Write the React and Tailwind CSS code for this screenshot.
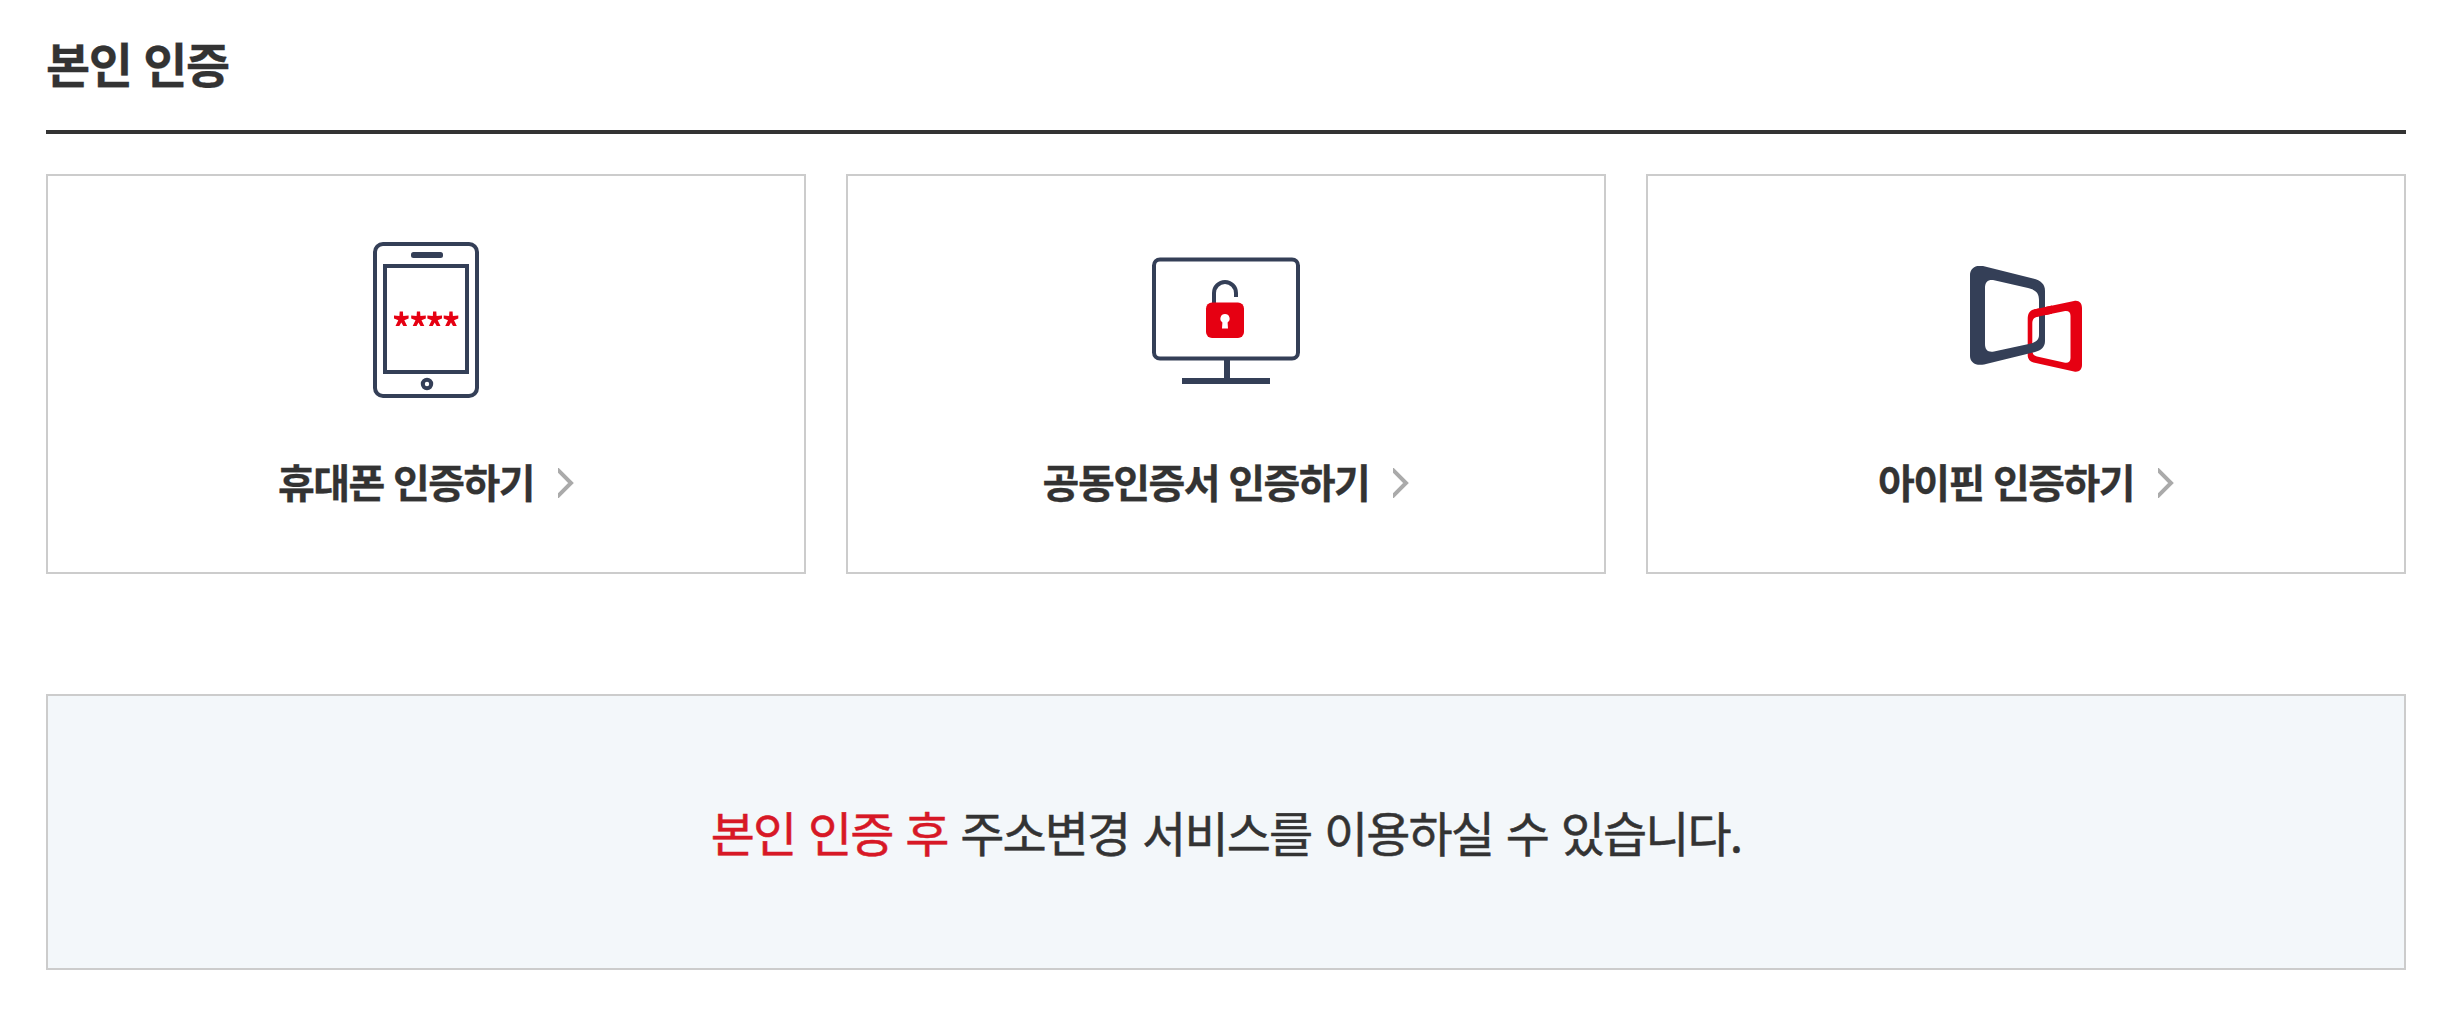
function PhoneIcon() {
  return (
    <svg width="108" height="158" viewBox="0 0 108 158" fill="none">
      <rect x="3" y="2" width="102" height="152" rx="8" stroke="#343f57" strokeWidth="4" />
      <rect x="39" y="10" width="32" height="6" rx="2.5" fill="#343f57" />
      <rect x="13" y="24" width="82" height="106" stroke="#343f57" strokeWidth="4" />
      <circle cx="55" cy="142" r="4.2" stroke="#343f57" strokeWidth="4" />
      {[29.3, 46.5, 62.7, 79].map(x => (
        <path
          key={x}
          transform={`translate(${x} 77)`}
          d="M-1.6 -7.500H1.600L1.900 -2.900L7.300 -3.400V-.4L3 1.200L5.800 7H2L0 3.600L-2 7H-5.800L-3 1.200L-7.300 -.4V-3.400L-1.900 -2.900Z"
          fill="#e60012"
        />
      ))}
    </svg>
  )
}

function MonitorIcon() {
  return (
    <svg width="148" height="128" viewBox="0 0 148 128" fill="none">
      <rect x="2" y="2.5" width="144" height="99" rx="6" stroke="#343f57" strokeWidth="4" />
      <rect x="72" y="102" width="6" height="20" fill="#343f57" />
      <rect x="30" y="121" width="88" height="6" fill="#343f57" />
      <path d="M62 47V36a11 11 0 0 1 22 0v4" stroke="#343f57" strokeWidth="4" />
      <rect x="54" y="45.5" width="38" height="35.5" rx="6" fill="#e60012" />
      <path d="M73 57a4.6 4.6 0 0 0-2.6 8.4l-.4 6.1h6l-.4-6.1A4.6 4.6 0 0 0 73 57z" fill="#fff" />
    </svg>
  )
}

function IpinIcon() {
  return (
    <svg width="112" height="110" viewBox="0 0 112 110" fill="none">
      <path
        fillRule="evenodd"
        fill="#e60012"
        d="M63.5 43.5L104 35C109 34 112 37 112 42V99C112 104 108.5 106.5 104 105.5L63.5 96.5C60 95.5 57.7 93 57.7 89V53C57.7 48 59.5 44.5 63.5 43.5ZM68 50.5C64 51.5 62.3 53.5 62.3 57V84C62.3 87.5 63.5 89.5 67 90.5L94 96.5C98 97.5 100.5 96 100.5 92V50C100.5 46 98.5 44.5 94 45.2Z"
      />
      <path
        fillRule="evenodd"
        fill="#343f57"
        d="M13 0L63 12.5C71 14.5 75 18 75 25V75C75 81 71 84.5 65 86L14 98.5C5 100 0 96 0 90V9C0 3 5-1.5 13 0ZM23 14C18 13.5 15 16 15 22V78C15 84 18 86.5 24 85.5L61 77.5C66.5 76 69 73.5 69 69V34C69 28 66.5 24 58 22Z"
      />
      {/* red frame passes over the navy one here */}
      <path d="M64 43.4L82 39.6V47.8L66 51Z" fill="#e60012" />
    </svg>
  )
}

function Chevron() {
  return (
    <svg className="mt-1 ml-6" width="16" height="30" viewBox="0 0 16 30" fill="none">
      <path d="M-1 1L13 15L-1 29" stroke="#aaa" strokeWidth="4" />
    </svg>
  )
}

const methods = [
  { label: '휴대폰 인증하기', icon: PhoneIcon },
  { label: '공동인증서 인증하기', icon: MonitorIcon },
  { label: '아이핀 인증하기', icon: IpinIcon },
]

function MethodCard({ label, icon: Icon }) {
  return (
    <a href="#" className="flex h-[400px] flex-col items-center border-2 border-[#ccc] bg-white pt-[52px]">
      <div className="flex h-[186px] items-center justify-center">
        <Icon />
      </div>
      <div className="mt-[37px] flex h-[60px] items-center">
        <span className="text-[40px] font-bold leading-[60px] tracking-[-1.5px] [word-spacing:1.5px] [-webkit-text-stroke:0.3px]">{label}</span>
        <Chevron />
      </div>
    </a>
  )
}

export default function App() {
  return (
    <main className="h-[1034px] bg-white pt-[27px] pr-[50px] pl-[46px] font-['Noto_Sans_CJK_KR',sans-serif] text-[#333]">
      <h2 className="h-[107px] border-b-4 border-[#333] text-[48px] font-bold leading-[70px] tracking-[-1.5px] [word-spacing:2.5px] [-webkit-text-stroke:0.3px]">본인 인증</h2>
      <div className="mt-10 grid grid-cols-3 gap-10">
        {methods.map(m => (
          <MethodCard key={m.label} {...m} />
        ))}
      </div>
      <div className="mt-[120px] flex h-[276px] items-center justify-center border-2 border-[#ccc] bg-[#f3f7fa] pb-0.5">
        <p className="text-[48px] leading-[70px] tracking-[-1.9px] [word-spacing:3.9px] [-webkit-text-stroke:0.5px]">
          <span className="text-[#d71826]">본인 인증 후</span> 주소변경 서비스를 이용하실 수 있습니다.
        </p>
      </div>
    </main>
  )
}
